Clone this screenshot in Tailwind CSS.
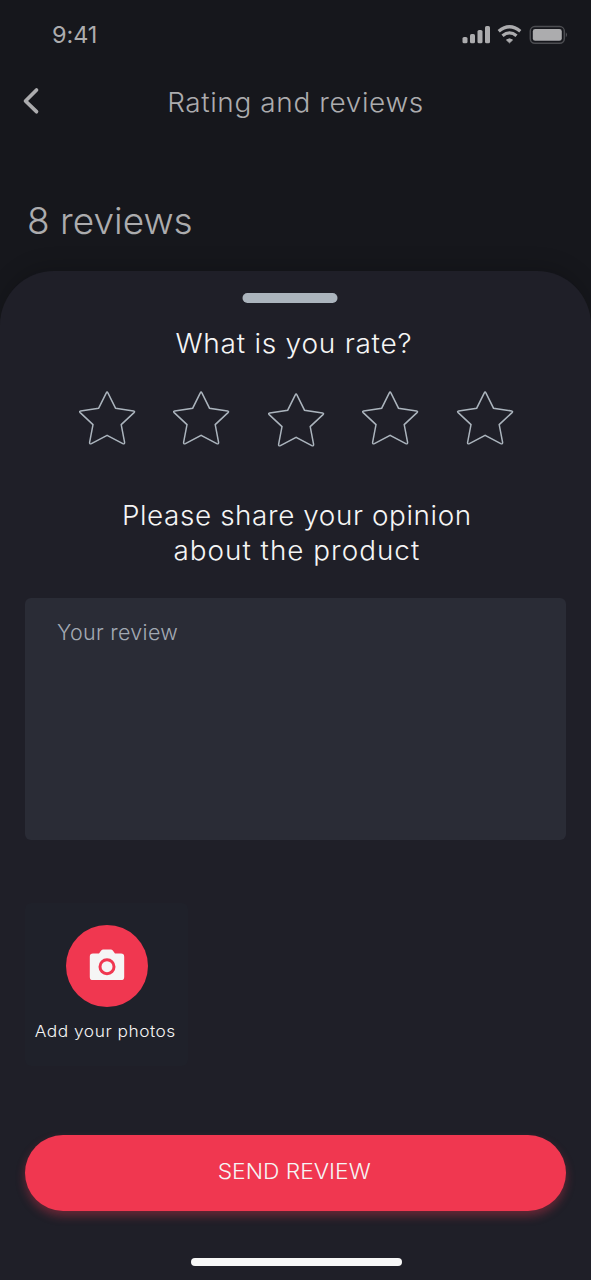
<!DOCTYPE html>
<html lang="en">
<head>
<meta charset="utf-8">
<title>Rating and reviews</title>
<script src="https://cdn.jsdelivr.net/npm/@tailwindcss/browser@4"></script>
</head>
<body class="bg-[#16171c]">
<div class="flex h-[1280px] w-[591px] flex-col overflow-hidden bg-[#16171c] font-[Inter,sans-serif] font-[350] text-[#f5f5f5]">
  <div class="flex h-[70px] shrink-0 items-center justify-between pr-[24px] pl-[52px] text-[#acacae]">
    <span class="text-[23.5px] font-normal tracking-[-0.1px]">9:41</span>
    <svg class="h-[20px] w-[105px]" viewBox="0 0 105 20" fill="currentColor">
      <rect x="0.5" y="12" width="5" height="6.3" rx="1.6"/><rect x="8" y="9" width="5" height="9.3" rx="1.6"/><rect x="15.5" y="5" width="5" height="13.3" rx="1.6"/><rect x="23" y="1" width="5" height="17.3" rx="1.6"/>
      <path d="M47.500 17.800 44.500 15Q47.500 12.700 50.500 15Z" stroke="currentColor" stroke-linejoin="round"/>
      <path d="M36.700 6.300Q47.500-2.700 58.300 6.300M40.500 10.800Q47.500 5 54.500 10.800" fill="none" stroke="currentColor" stroke-width="3.300"/>
      <rect x="68.300" y="1.600" width="34" height="16.600" rx="4.500" fill="none" stroke="#4c4d51" stroke-width="1.500"/>
      <rect x="70.800" y="4" width="29" height="11.800" rx="2.400"/><path d="M103.800 7.200q2.200 2.600 0 5.400z" fill="#5b5c60"/>
    </svg>
  </div>
  <div class="grid h-[84px] shrink-0 grid-cols-[64px_1fr_64px] items-start pt-[14px] text-[#acacae]">
    <svg class="mt-[3px] ml-[22px] h-[28px] w-[20px]" viewBox="0 0 20 28" fill="none" stroke="currentColor" stroke-width="3.700" stroke-linecap="round" stroke-linejoin="round"><path d="M14.500 3 3.500 14l11 10.700"/></svg>
    <span class="mt-px scale-x-[1.035] text-center text-[27px] leading-[36px] whitespace-nowrap tracking-[0.6px]">Rating and reviews</span>
  </div>
  <h1 class="mt-[42px] ml-[27px] h-[75px] shrink-0 text-[37px] leading-[50px] text-[#acacae]">8 reviews</h1>
  <main class="flex flex-1 flex-col items-center rounded-t-[54px] bg-[#1f1f28] shadow-[0_-6px_20px_rgba(0,0,0,0.16)]">
    <div class="mt-[22px] h-[9.5px] w-[95px] -translate-x-[5.5px] shrink-0 rounded-full bg-[#abb4bd]"></div>
    <h2 class="mt-[23px] -translate-x-[2px] scale-x-[1.04] text-[27px] leading-[36px] tracking-[0.7px]">What is you rate?</h2>
    <div class="mt-[26px] flex h-[60px] gap-[34.5px] text-[#abb4bd]">
      <svg class="h-[60px] w-[60px]" viewBox="0 0 60 60" fill="none" stroke="currentColor" stroke-width="1.500" stroke-linejoin="round"><path id="star" d="M29.300 4.900Q30.100 2.900 30.900 4.900L38.500 20.200 56.500 22.900Q58.300 23.300 57 24.600L44.200 36.600 47.600 54.300Q47.700 56.500 45.800 55.600L30.100 47.300 14.400 55.600Q12.400 56.500 12.600 54.300L16 36.600 3.200 24.600Q1.900 23.300 3.700 22.900L21.700 20.200Z"/></svg>
      <svg class="h-[60px] w-[60px]" viewBox="0 0 60 60" fill="none" stroke="currentColor" stroke-width="1.500"><use href="#star"/></svg>
      <svg class="mt-[2px] h-[60px] w-[60px]" viewBox="0 0 60 60" fill="none" stroke="currentColor" stroke-width="1.500"><use href="#star"/></svg>
      <svg class="h-[60px] w-[60px]" viewBox="0 0 60 60" fill="none" stroke="currentColor" stroke-width="1.500"><use href="#star"/></svg>
      <svg class="h-[60px] w-[60px]" viewBox="0 0 60 60" fill="none" stroke="currentColor" stroke-width="1.500"><use href="#star"/></svg>
    </div>
    <p class="mt-[50px] translate-x-[1px] scale-x-[1.03] text-center text-[27px] leading-[35px] tracking-[0.6px]">Please share your opinion<br><span class="tracking-[1px]">about the product</span></p>
    <div class="mt-[30px] h-[242px] w-[541px] shrink-0 rounded-[6px] bg-[#2a2c36] pt-[19px] pl-[32px] text-[21.5px] leading-[30px] tracking-[0.3px] text-[#a2a9b3]">Your review</div>
    <div class="mt-[63px] ml-[25px] flex h-[163px] w-[163px] shrink-0 flex-col items-center self-start rounded-[6px] bg-[#1f212a] pt-[22px]">
      <div class="flex size-[82px] shrink-0 items-center justify-center rounded-full bg-[#f03750]">
        <svg class="mb-[2px] h-[32px] w-[36px]" viewBox="0 0 36 32"><path d="M4 4.500h6l2.200-3Q13 .5 14.200.5h7.600q1.200 0 2 1l2.200 3h6q3.200 0 3.200 3.200v20.200q0 3.200-3.200 3.200H4Q.8 31.100.8 27.900V7.700Q.8 4.500 4 4.500Z" fill="#f5f5f5"/><circle cx="18" cy="17.700" r="7" fill="#f5f5f5" stroke="#f03750" stroke-width="3"/></svg>
      </div>
      <span class="mt-[13px] -translate-x-[1px] scale-x-[1.05] text-[16.5px] leading-[22px] whitespace-nowrap tracking-[0.5px]">Add your photos</span>
    </div>
    <button class="mt-[69px] h-[76px] w-[541px] shrink-0 rounded-full bg-[#f03750] pr-[3px] pb-[3px] text-[21.500px] shadow-[0_5px_10px_rgba(240,55,80,0.35)]"><span class="inline-block scale-x-[1.06]">SEND REVIEW</span></button>
    <div class="mt-[47px] h-[8px] w-[211px] translate-x-[1px] shrink-0 rounded-full bg-[#f7f7f7]"></div>
  </main>
</div>
</body>
</html>
